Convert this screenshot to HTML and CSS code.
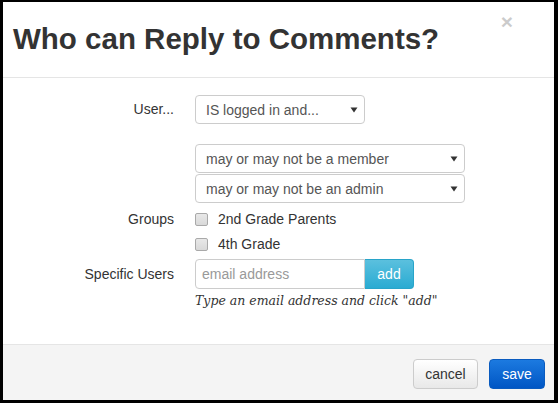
FILE: index.html
```html
<!DOCTYPE html>
<html>
<head>
<meta charset="utf-8">
<link rel="stylesheet" href="styles.css">
</head>
<body>
<div class="modal">
  <div class="modal-header">
    <h1 class="title">Who can Reply to Comments?</h1>
    <span class="close">×</span>
  </div>
  <div class="modal-body">
    <div class="row row-user">
      <div class="label">User...</div>
      <div class="controls">
        <div class="select select-short"><span>IS logged in and...</span><svg class="caret" width="8" height="6" viewBox="0 0 8 6"><path d="M0.5 0.5 L7.5 0.5 L4 5.5 Z" fill="#333"/></svg></div>
      </div>
    </div>
    <div class="row row-roles">
      <div class="label"></div>
      <div class="controls stack">
        <div class="select select-wide"><span>may or may not be a member</span><svg class="caret" width="8" height="6" viewBox="0 0 8 6"><path d="M0.5 0.5 L7.5 0.5 L4 5.5 Z" fill="#333"/></svg></div>
        <div class="select select-wide"><span>may or may not be an admin</span><svg class="caret" width="8" height="6" viewBox="0 0 8 6"><path d="M0.5 0.5 L7.5 0.5 L4 5.5 Z" fill="#333"/></svg></div>
      </div>
    </div>
    <div class="row row-groups">
      <div class="label">Groups</div>
      <div class="controls checks">
        <label class="check"><span class="box"></span>2nd Grade Parents</label>
        <label class="check"><span class="box"></span>4th Grade</label>
      </div>
    </div>
    <div class="row row-users">
      <div class="label">Specific Users</div>
      <div class="controls">
        <div class="input-group">
          <div class="input">email address</div>
          <div class="btn-add">add</div>
        </div>
        <div class="help">Type an email address and click "add"</div>
      </div>
    </div>
  </div>
  <div class="modal-footer">
    <div class="btn btn-cancel">cancel</div>
    <div class="btn btn-save">save</div>
  </div>
</div>
</body>
</html>
```
FILE: styles.css
```css
html, body {
  margin: 0;
  padding: 0;
  background: #000;
}
body {
  width: 558px;
  height: 403px;
  overflow: hidden;
  font-family: "Liberation Sans", Arial, sans-serif;
  font-size: 14px;
  color: #333;
}
.modal {
  margin: 2px 0 0 3px;
  width: 551px;
  height: 398px;
  background: #fff;
  display: flex;
  flex-direction: column;
}
.modal-header {
  height: 75px;
  border-bottom: 1px solid #e5e5e5;
  display: flex;
  justify-content: space-between;
  align-items: flex-start;
  padding: 0 0 0 10px;
}
.title {
  margin: 17px 0 0 0;
  font-size: 29.5px;
  line-height: 40px;
  font-weight: bold;
  color: #333;
}
.close {
  font-size: 21px;
  font-weight: bold;
  line-height: 1;
  color: #000;
  opacity: 0.2;
  margin: 9px 41px 0 0;
}
.modal-body {
  flex: 1;
  padding-top: 17px;
}
.row {
  display: grid;
  grid-template-columns: 171px 1fr;
  column-gap: 21px;
}
.label {
  text-align: right;
  line-height: 29px;
}
.select {
  box-sizing: border-box;
  height: 29px;
  border: 1px solid #ccc;
  border-radius: 4px;
  display: flex;
  align-items: center;
  justify-content: space-between;
  padding: 0 6px 0 10px;
  color: #555;
  background: #fff;
}
.select-short { width: 170px; }
.select-wide { width: 270px; }
.caret { margin-top: 1px; }
.row-roles { margin-top: 20px; }
.stack { display: flex; flex-direction: column; gap: 1px; }
.row-groups { margin-top: 5px; }
.row-groups .label { line-height: 22px; }
.checks { display: flex; flex-direction: column; gap: 3px; }
.check {
  display: flex;
  align-items: center;
  height: 22px;
  color: #333;
}
.box {
  box-sizing: border-box;
  width: 13px;
  height: 13px;
  border: 1px solid #a9a9a9;
  border-radius: 2px;
  background: linear-gradient(#e8e8e8, #d9d9d9);
  margin-right: 10px;
}
.row-users { margin-top: 4px; }
.row-users .label { line-height: 30px; }
.input-group { display: flex; }
.input {
  box-sizing: border-box;
  width: 170px;
  height: 30px;
  border: 1px solid #ccc;
  border-radius: 4px 0 0 4px;
  padding: 0 6px;
  line-height: 28px;
  color: #999;
}
.btn-add {
  box-sizing: border-box;
  width: 49px;
  height: 30px;
  border: 1px solid #28a4c9;
  border-left: none;
  border-radius: 0 4px 4px 0;
  background: linear-gradient(#5bc0de, #2aabd2);
  color: #fff;
  text-align: center;
  line-height: 28px;
}
.help {
  font-family: "DejaVu Serif", Georgia, serif;
  font-style: italic;
  font-size: 12.5px;
  line-height: 20px;
  margin-top: 2px;
  color: #333;
}
.modal-footer {
  height: 56px;
  border-top: 1px solid #e5e5e5;
  background: #f4f4f4;
  display: flex;
  justify-content: flex-end;
  align-items: flex-start;
  gap: 11px;
  padding: 14px 9px 0 0;
  box-sizing: border-box;
}
.btn {
  box-sizing: border-box;
  height: 30px;
  line-height: 28px;
  border-radius: 4px;
  text-align: center;
}
.btn-cancel {
  width: 65px;
  border: 1px solid #ccc;
  background: linear-gradient(#fff, #e8e8e8);
  color: #333;
}
.btn-save {
  width: 56px;
  border: 1px solid #0a5bbf;
  background: linear-gradient(#1c7ae0, #0056c4);
  color: #fff;
}
```
